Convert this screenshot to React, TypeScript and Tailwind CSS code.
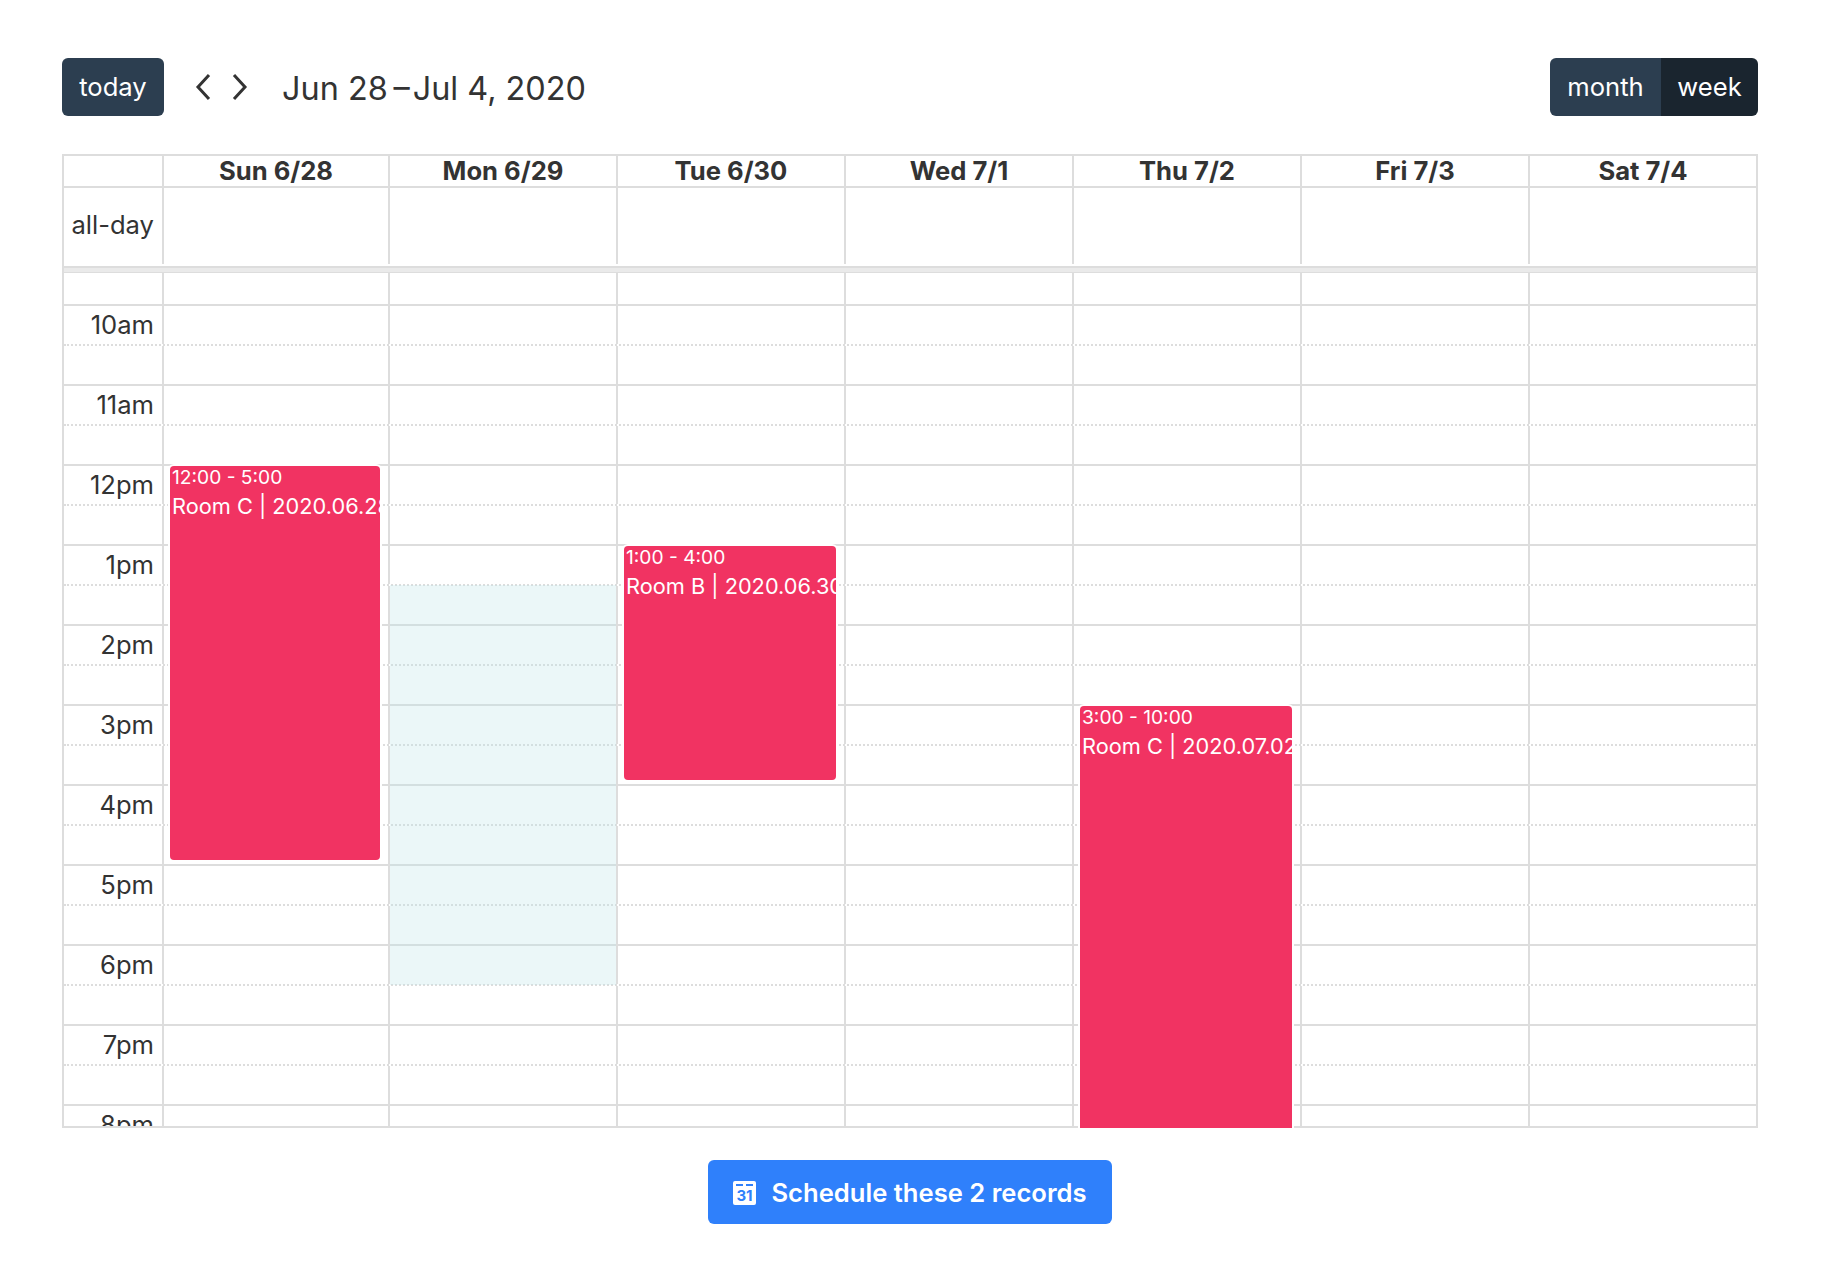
const HOURS = ['10am', '11am', '12pm', '1pm', '2pm', '3pm', '4pm', '5pm', '6pm', '7pm', '8pm']
const COLS = 'grid grid-cols-[100px_226px_228px_228px_228px_228px_228px_1fr]'
const DAYS = ['Sun 6/28', 'Mon 6/29', 'Tue 6/30', 'Wed 7/1', 'Thu 7/2', 'Fri 7/3', 'Sat 7/4']

// one slot row: 8 cells, the last has no right border because the table frame draws it
function SlotRow({ label, dotted, className }: { label?: string; dotted: boolean; className?: string }) {
  return (
    <div className={`${COLS} border-b-2 border-[#ddd] ${dotted ? 'border-dotted' : ''} ${className ?? 'h-10'}`}>
      <div className="border-r-2 border-[#ddd] pr-[8px] text-right text-[25.6px] leading-[38px] whitespace-nowrap">{label}</div>
      {DAYS.map((d, i) => (
        <div key={d} className={i < 6 ? 'border-r-2 border-[#ddd]' : ''} />
      ))}
    </div>
  )
}

function CalEvent({ time, title, className }: { time: string; title: string; className: string }) {
  return (
    <div className={`absolute bg-[#f13362] rounded-[4px] shadow-[0_0_0_2px_#fff] overflow-hidden text-white pl-[2px] ${className}`}>
      <div className="text-[19.2px] leading-[23px] whitespace-nowrap">{time}</div>
      <div className="text-[21.76px] leading-[30px] mt-[2px] whitespace-nowrap">{title}</div>
    </div>
  )
}

function CalendarIcon() {
  return (
    <svg width="23" height="24" viewBox="0 0 23 24" className="shrink-0">
      <rect width="23" height="24" rx="2" fill="#fff" />
      <rect x="3" y="3" width="7" height="2" fill="#2f80fb" />
      <rect x="13" y="3" width="7" height="2" fill="#2f80fb" />
      <text x="11.5" y="20" textAnchor="middle" fontSize="15" fontWeight="700" fill="#2f80fb" fontFamily="Inter, sans-serif">31</text>
    </svg>
  )
}

export default function App() {
  return (
    <div className="min-h-[1284px] bg-white pt-[58px] pl-[62px] font-['Inter',sans-serif] text-[#333]">
      <div className="w-[1696px]">
        {/* Toolbar */}
        <div className="flex items-center h-[58px]">
          <button className="h-full w-[102px] rounded-[6px] bg-[#2c3e50] text-white text-[25.6px] pt-[1px]">today</button>
          <div className="flex items-center ml-[31px] gap-[21px]">
            <svg width="16" height="28" viewBox="0 0 16 28" fill="none" stroke="#333" strokeWidth="3">
              <path d="M14 2 3 14l11 12" />
            </svg>
            <svg width="16" height="28" viewBox="0 0 16 28" fill="none" stroke="#333" strokeWidth="3">
              <path d="M2 2l11 12L2 26" />
            </svg>
          </div>
          <h2 className="ml-[34px] pt-[5px] text-[32.4px] leading-none whitespace-nowrap">Jun 28{'\u2009–\u200A'}Jul 4, 2020</h2>
          <div className="ml-auto flex h-full text-white text-[25.6px]">
            <button className="w-[111px] rounded-l-[6px] bg-[#2c3e50] pt-[1px]">month</button>
            <button className="w-[97px] rounded-r-[6px] bg-[#1a252f] pt-[1px]">week</button>
          </div>
        </div>

        {/* Calendar table */}
        <div className="mt-[38px] border-x-2 border-t-2 border-[#ddd]">
          <div className={`${COLS} h-8 border-b-2 border-[#ddd]`}>
            <div className="border-r-2 border-[#ddd]" />
            {DAYS.map((d, i) => (
              <div key={d} className={`text-center font-bold text-[25.6px] leading-[30px] whitespace-nowrap ${i < 6 ? 'border-r-2 border-[#ddd]' : ''}`}>
                {d}
              </div>
            ))}
          </div>
          <div className={`${COLS} h-[76px] mb-[2px]`}>
            <div className="border-r-2 border-[#ddd] pr-[8px] text-right text-[25.6px] leading-[74px]">all-day</div>
            {DAYS.map((d, i) => (
              <div key={d} className={i < 6 ? 'border-r-2 border-[#ddd]' : ''} />
            ))}
          </div>
          <div className="h-[7px] bg-[#eaeaea] border-t-2 border-b border-[#ddd]" />

          {/* Time grid: the events run over the table's bottom line */}
          <div className="relative h-[855px] overflow-hidden">
            <SlotRow dotted={false} className="h-[33px]" />
            {HOURS.map(h => (
              <div key={h}>
                <SlotRow label={h} dotted />
                <SlotRow dotted={false} />
              </div>
            ))}
            <div className="absolute left-0 right-0 bottom-0 h-[2px] bg-[#ddd]" />
            <div className="absolute left-[326px] top-[312px] w-[226px] h-[400px] bg-[#bce4e8]/30" />
            <CalEvent time="12:00 - 5:00" title="Room C | 2020.06.28" className="left-[106px] top-[193px] w-[210px] h-[394px]" />
            <CalEvent time="1:00 - 4:00" title="Room B | 2020.06.30" className="left-[560px] top-[273px] w-[212px] h-[234px]" />
            <CalEvent time="3:00 - 10:00" title="Room C | 2020.07.02" className="left-[1016px] top-[433px] w-[212px] h-[560px]" />
          </div>
        </div>

        {/* Schedule action */}
        <div className="flex justify-center mt-8">
          <button className="flex items-center justify-center gap-[15px] w-[404px] h-16 rounded-[6px] bg-[#2f80fb] text-white text-[25.6px] font-semibold whitespace-nowrap pt-[2px]">
            <CalendarIcon />
            Schedule these 2 records
          </button>
        </div>
      </div>
    </div>
  )
}
